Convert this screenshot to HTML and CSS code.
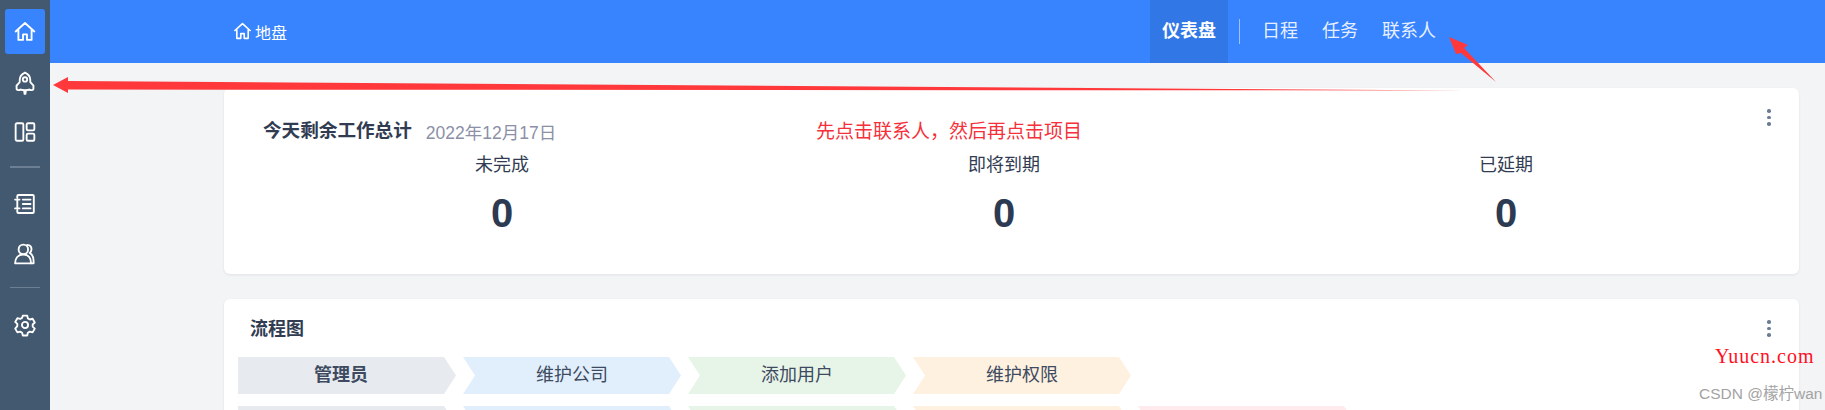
FILE: index.html
```html
<!DOCTYPE html>
<html lang="zh">
<head>
<meta charset="utf-8">
<title>仪表盘</title>
<link rel="stylesheet" href="styles.css">
</head>
<body>
<div class="app">
  <aside class="sidebar">
    <a class="side-item active"><svg class="side-icon" viewBox="0 0 20 20"><path d="M1.500 9.500 10 1.800l8.500 7.700M4 8v9.200h4.200v-5h3.600v5H16V8"/></svg></a>
    <a class="side-item"><svg class="side-icon" viewBox="0 0 20 20"><path d="M10 1.400C6.800 2.800 5.200 5.200 5.200 8.200v2L2.300 13.400l.1 3.200c.6 1 2.600 1 3.600.2 1 .8 7 .8 8 0 1 .8 3 .8 3.600-.2l.1-3.200-2.900-3.200v-2C14.800 5.200 13.200 2.800 10 1.400z"/><circle cx="10" cy="7.700" r="2"/><path class="solid" d="M8.300 17.500h3.400l-.6 4H8.900z"/></svg></a>
    <a class="side-item"><svg class="side-icon" viewBox="0 0 20 20"><rect x="1.500" y="2" width="7" height="16" rx="1.200"/><rect x="11.500" y="2" width="7" height="6.500" rx="1.200"/><rect x="11.500" y="11.500" width="7" height="6.500" rx="1.200"/></svg></a>
    <div class="side-divider"></div>
    <a class="side-item"><svg class="side-icon" viewBox="0 0 20 20"><path d="M3 4.500V2.800c0-.6.500-1 1-1h13c.6 0 1 .4 1 1v14.400c0 .6-.4 1-1 1H4c-.5 0-1-.4-1-1v-1.700"/><path d="M1 6h4M1 14h4M3 6v8M8 6h7M8 10h7M8 14h7"/></svg></a>
    <a class="side-item"><svg class="side-icon" viewBox="0 0 20 20"><circle cx="8.500" cy="5.800" r="4.300"/><path d="M1 18.500c0-4.800 3-8 7.500-8s7 3.200 7 8z"/><path d="M12 1.700c2.600.2 4 2 3.900 4.200-.1 1.500-.7 2.500-1.600 3.200 2.300 1.200 3.500 4 3.500 7.200v2.200h-2.300"/></svg></a>
    <div class="side-divider thin"></div>
    <a class="side-item"><svg class="side-icon" viewBox="0 0 20 20"><path d="M8 1.500h4l.6 2.500 1.800 1 2.500-.7 2 3.400-1.900 1.800v2l1.900 1.800-2 3.400-2.500-.7-1.800 1-.6 2.500H8l-.6-2.500-1.800-1-2.500.7-2-3.400L3 11V9L1.100 7.200l2-3.400 2.500.7 1.800-1z"/><circle cx="10" cy="10" r="2.800"/></svg></a>
  </aside>
  <div class="main">
    <header class="topbar">
      <div class="crumb">
        <svg class="crumb-icon" viewBox="0 0 20 20"><path d="M1.500 9.500 10 1.800l8.500 7.700M4 8v9.200h4.200v-5h3.600v5H16V8"/></svg>
        <span>地盘</span>
      </div>
      <nav class="nav">
        <a class="nav-item current">仪表盘</a>
        <span class="nav-divider"></span>
        <a class="nav-item">日程</a>
        <a class="nav-item">任务</a>
        <a class="nav-item">联系人</a>
      </nav>
    </header>
    <main class="content">
      <section class="card summary">
        <div class="summary-head">
          <h2 class="summary-title">今天剩余工作总计</h2>
          <span class="summary-date">2022年12月17日</span>
          <span class="more"><i></i><i></i><i></i></span>
        </div>
        <div class="stats">
          <div class="stat"><div class="stat-label">未完成</div><div class="stat-value">0</div></div>
          <div class="stat"><div class="stat-label">即将到期</div><div class="stat-value">0</div></div>
          <div class="stat"><div class="stat-label">已延期</div><div class="stat-value">0</div></div>
        </div>
      </section>
      <section class="card flow">
        <div class="flow-head">
          <h2 class="flow-title">流程图</h2>
          <span class="more"><i></i><i></i><i></i></span>
        </div>
        <div class="flow-row">
          <div class="step first grey">管理员</div>
          <div class="step blue">维护公司</div>
          <div class="step green">添加用户</div>
          <div class="step orange">维护权限</div>
        </div>
        <div class="flow-row">
          <div class="step first grey"></div>
          <div class="step blue"></div>
          <div class="step green"></div>
          <div class="step orange"></div>
          <div class="step pink"></div>
        </div>
      </section>
    </main>
  </div>
</div>
<svg class="marks" viewBox="0 0 1825 410" width="1825" height="410">
  <polygon class="mark" points="53,85 68,77 68,81 1465,90.500 68,89.500 68,93"/>
  <polygon class="mark" points="1449,37 1468,45 1464,48 1496,82 1461,53 1456,54"/>
</svg>
<div class="note">先点击联系人&#xFF0C;然后再点击项目</div>
<div class="site-mark">Yuucn.com</div>
<div class="csdn-mark">CSDN @檬柠wan</div>
</body>
</html>
```
FILE: styles.css
```css
* { box-sizing: border-box; }
html, body { margin: 0; height: 410px; overflow: hidden; }
body {
  position: relative;
  background: #f3f4f6;
  color: #313c52;
  font-family: "Liberation Sans", "Noto Sans CJK SC", sans-serif;
  font-size: 18px;
}
.app { display: flex; height: 410px; overflow: hidden; }

.sidebar {
  flex: 0 0 50px;
  background: #435970;
  padding-top: 9px;
  display: flex;
  flex-direction: column;
  align-items: center;
}
.side-item {
  width: 40px;
  height: 45px;
  margin-bottom: 5px;
  border-radius: 3px;
  display: flex;
  align-items: center;
  justify-content: center;
}
.side-item.active { background: #3884ff; }
.side-icon { width: 22px; height: 22px; overflow: visible; fill: none; stroke: #fff; stroke-width: 1.700; stroke-linejoin: round; stroke-linecap: round; }
.side-icon .solid { fill: #fff; stroke: none; }
.side-divider { width: 30px; height: 2px; background: #6d7f92; margin: 7px 0 13px; }
.side-divider.thin { height: 1px; margin: 6px 0 14px; }

.main { flex: 1; min-width: 0; }
.topbar {
  height: 63px;
  background: #3884ff;
  color: #fff;
  display: flex;
  align-items: center;
  padding-left: 183px;
}
.crumb { display: flex; align-items: center; gap: 3px; font-size: 16px; width: 917px; }
.crumb-icon { width: 19px; height: 19px; fill: none; stroke: #fff; stroke-width: 1.700; stroke-linejoin: round; }
.nav { display: flex; align-items: center; height: 63px; gap: 24px; color: rgba(255,255,255,.9); }
.nav-item { line-height: 63px; }
.nav-item.current {
  background: #3177e6;
  color: #fff;
  font-weight: 700;
  width: 78px;
  text-align: center;
  margin-right: -13px;
}
.nav-divider { width: 1px; height: 25px; margin-right: -2px; background: rgba(255,255,255,.5); }

.content { padding: 25px 0 0 174px; }
.card {
  width: 1575px;
  background: #fff;
  border-radius: 6px;
  box-shadow: 0 1px 3px rgba(20,30,50,.08);
  position: relative;
}
.summary { height: 186px; padding: 27px 42px 0 27px; margin-bottom: 25px; }
.summary-head { display: flex; align-items: center; gap: 13px; padding-left: 12px; height: 32px; }
.summary-title, .flow-title { margin: 0; font-size: 18px; font-weight: 700; line-height: 32px; }
.summary-title { font-size: 18.600px; }
.summary-date { color: #8b90a6; font-size: 17.500px; margin-left: 1px; }
.more {
  position: absolute;
  top: 21px;
  right: 28px;
  width: 4px;
  display: flex;
  flex-direction: column;
  gap: 3px;
}
.more i { width: 3.500px; height: 3.500px; border-radius: 50%; background: #6b7c93; }
.stats { display: flex; margin-top: 5px; }
.stat { flex: 1; text-align: center; }
.stat-label { font-size: 18px; line-height: 26px; }
.stat-value { font-size: 40px; font-weight: 700; line-height: 46px; margin-top: 12px; color: #2c3a52; }

.flow { height: 300px; padding: 14px 14px 0; }
.flow-head { padding-left: 12px; height: 32px; margin-bottom: 12px; }
.flow-row { display: flex; gap: 7px; margin-bottom: 12px; }
.step {
  width: 218px;
  height: 37px;
  line-height: 37px;
  text-align: center;
  font-size: 18px;
  clip-path: polygon(0 0, 206px 0, 100% 50%, 206px 100%, 0 100%, 12px 50%);
  color: #3d4a5f;
}
.step.first {
  font-weight: 700;
  padding-right: 12px;
  clip-path: polygon(0 0, 206px 0, 100% 50%, 206px 100%, 0 100%);
}
.grey { background: #e7eaef; }
.blue { background: #e1effc; }
.green { background: #e7f4e8; }
.orange { background: #fff1df; }
.pink { background: #ffebee; }

.marks { position: absolute; left: 0; top: 0; pointer-events: none; }
.mark { fill: #ff383b; }
.note {
  position: absolute;
  left: 816px;
  top: 118px;
  line-height: 28px;
  font-size: 19px;
  color: #f5303a;
}
.site-mark {
  position: absolute;
  left: 1715px;
  top: 344px;
  font-family: "Liberation Serif", serif;
  font-size: 20px;
  letter-spacing: 1px;
  line-height: 24px;
  color: #ff0f25;
}
.csdn-mark {
  position: absolute;
  left: 1699px;
  top: 385px;
  font-size: 15.500px;
  line-height: 18px;
  white-space: nowrap;
  color: #a3a3a3;
}
```
